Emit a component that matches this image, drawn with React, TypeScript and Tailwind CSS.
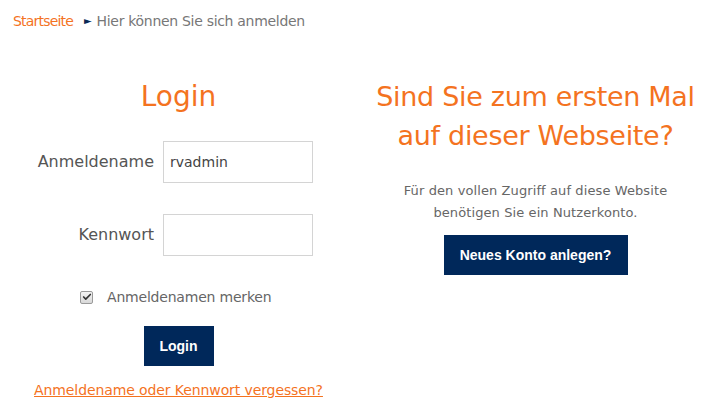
import { Check } from 'lucide-react';

const font = { fontFamily: '"DejaVu Sans", "Liberation Sans", sans-serif' };

function Field({ label, value }: { label: string; value?: string }) {
  return (
    <div className="flex items-center">
      <label className="w-[154px] text-right text-[16px] text-[#555]">{label}</label>
      <div className="ml-[9px] flex h-[42px] w-[150px] items-center border border-[#d4d4d4] bg-white px-[6px] text-[14px] text-[#444]">
        {value}
      </div>
    </div>
  );
}

export default function App() {
  return (
    <div className="h-[410px] w-[714px] overflow-hidden bg-white" style={font}>
      {/* Breadcrumb */}
      <div className="flex items-center pl-[13px] pt-[11px] text-[14px] leading-[20px] tracking-[-0.3px]">
        <span className="tracking-[-0.8px] text-[#f4731f]">Startseite</span>
        <span className="ml-[11px] mr-[5px] text-[10px] text-[#0a2a55]">►</span>
        <span className="text-[#777]">Hier können Sie sich anmelden</span>
      </div>

      <div className="mt-[46px] grid grid-cols-2">
        {/* Login */}
        <div className="flex flex-col">
          <h2 className="text-center text-[28px] leading-[39px] text-[#f4731f]">Login</h2>
          <div className="mt-[25px]">
            <Field label="Anmeldename" value="rvadmin" />
          </div>
          <div className="mt-[31px]">
            <Field label="Kennwort" />
          </div>
          <div className="mt-[31px] flex h-[20px] items-center pl-[80px]">
            <div className="flex h-[13px] w-[13px] items-center justify-center rounded-[2px] border border-[#9a9a9a] bg-gradient-to-b from-[#f4f4f4] to-[#d8d8d8]">
              <Check size={10} strokeWidth={4} className="text-[#333]" />
            </div>
            <span className="ml-[14px] text-[14px] text-[#666] tracking-[-0.2px]">Anmeldenamen merken</span>
          </div>
          <div className="mt-[19px] flex justify-center">
            <button
              className="h-[40px] w-[70px] bg-[#00285a] text-[14px] font-bold text-white"
              style={{ fontFamily: '"Liberation Sans", Arial, sans-serif' }}
            >
              Login
            </button>
          </div>
          <a className="mt-[14px] text-center text-[14px] leading-[20px] text-[#f4731f] underline tracking-[-0.1px]">
            Anmeldename oder Kennwort vergessen?
          </a>
        </div>

        {/* Signup */}
        <div className="flex flex-col items-center">
          <h2 className="text-center text-[27px] leading-[39px] text-[#f4731f] tracking-[-0.3px]">
            Sind Sie zum ersten Mal
            <br />
            auf dieser Webseite?
          </h2>
          <p className="mt-[25px] text-center text-[13px] leading-[22px] text-[#666] tracking-[0.1px]">
            Für den vollen Zugriff auf diese Website
            <br />
            benötigen Sie ein Nutzerkonto.
          </p>
          <button
            className="mt-[11px] h-[40px] w-[184px] bg-[#00285a] text-[14px] font-bold text-white"
            style={{ fontFamily: '"Liberation Sans", Arial, sans-serif' }}
          >
            Neues Konto anlegen?
          </button>
        </div>
      </div>
    </div>
  );
}
